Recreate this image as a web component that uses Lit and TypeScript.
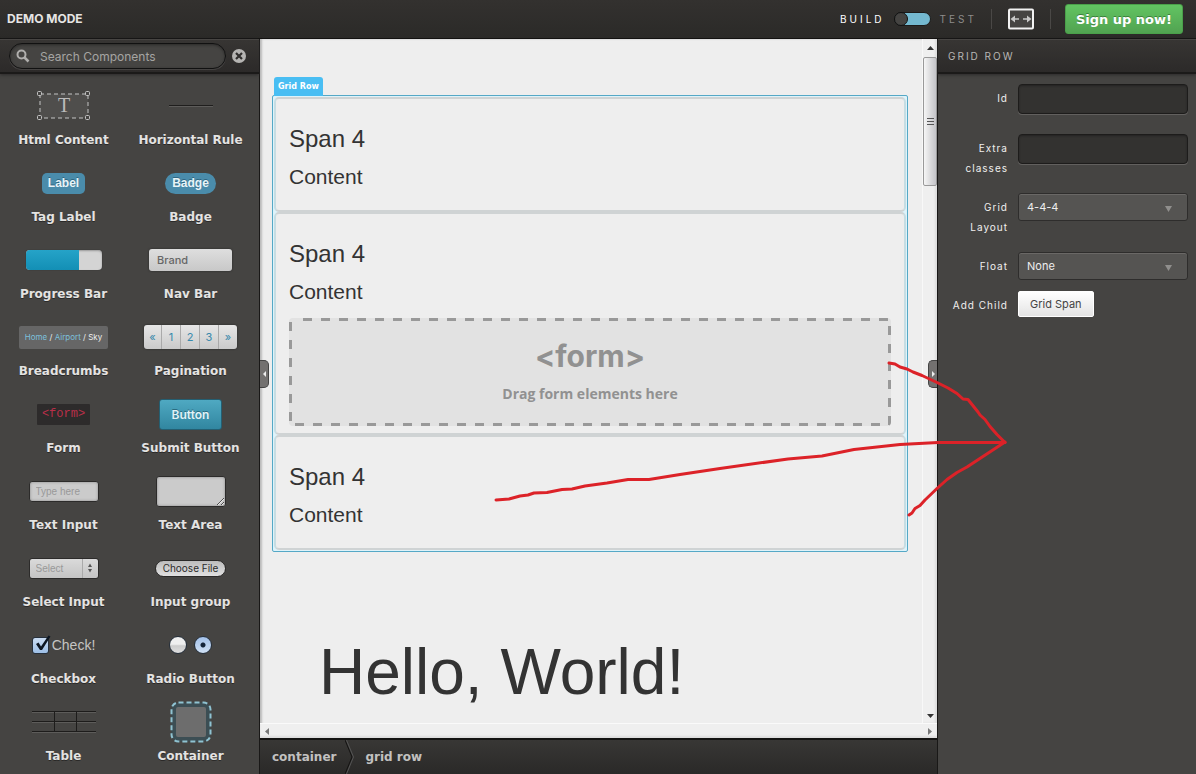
import { LitElement, html, svg, css, TemplateResult } from "lit";
import { customElement, property } from "lit/decorators.js";

interface ComponentItem {
  name: string;
  preview: TemplateResult;
}

const components: ComponentItem[] = [
  {
    name: "Html Content",
    preview: html`<svg width="54" height="30" viewBox="0 0 54 30" aria-hidden="true">
      <rect x="3" y="3" width="48" height="24" fill="#4f4e4c" stroke="#c4c4c4" stroke-dasharray="4 3" />
      ${[1, 49].map((x) => [1, 25].map((y) => svg`<rect x=${x - 0.5} y=${y - 0.5} width="4" height="4" rx="1" fill="#454442" stroke="#c4c4c4" />`))}
      <text x="27" y="21" text-anchor="middle" class="serif-t">T</text>
    </svg>`,
  },
  { name: "Horizontal Rule", preview: html`<hr class="rule" />` },
  { name: "Tag Label", preview: html`<span class="tag">Label</span>` },
  { name: "Badge", preview: html`<span class="tag pill">Badge</span>` },
  { name: "Progress Bar", preview: html`<div class="progress"><div class="progress-fill"></div></div>` },
  { name: "Nav Bar", preview: html`<div class="navbar">Brand</div>` },
  {
    name: "Breadcrumbs",
    preview: html`<div class="crumbs"><a href="#">Home</a> / <a href="#">Airport</a> / Sky</div>`,
  },
  {
    name: "Pagination",
    preview: html`<div class="pages">${["«", "1", "2", "3", "»"].map((p) => html`<a href="#">${p}</a>`)}</div>`,
  },
  { name: "Form", preview: html`<code class="code">&lt;form&gt;</code>` },
  { name: "Submit Button", preview: html`<button class="submit" type="button">Button</button>` },
  {
    name: "Text Input",
    preview: html`<input class="text" type="text" placeholder="Type here" aria-label="Text input preview" />`,
  },
  { name: "Text Area", preview: html`<textarea class="area" aria-label="Text area preview"></textarea>` },
  {
    name: "Select Input",
    preview: html`<span class="select-wrap">
      <select class="mini-select" aria-label="Select preview"><option>Select</option></select>
      <svg class="stepper" width="6" height="10" viewBox="0 0 6 10" aria-hidden="true">
        <path d="M3 0.500L5 4H1zM3 9.500L1 6h4z" fill="#555" />
      </svg>
    </span>`,
  },
  { name: "Input group", preview: html`<button class="file" type="button">Choose File</button>` },
  {
    name: "Checkbox",
    preview: html`<label class="check">
      <span class="check-box">
        <input type="checkbox" checked />
        <svg width="17" height="17" viewBox="0 0 17 17" aria-hidden="true">
          <path d="M2 9l2.500-1.500L7 11.500 14.500.500 16.500 1.500 8 15H6z" fill="#0c1622" />
        </svg>
      </span>
      Check!
    </label>`,
  },
  {
    name: "Radio Button",
    preview: html`<div class="radios">
      <input type="radio" name="demo" aria-label="First option" />
      <input type="radio" name="demo" aria-label="Second option" checked />
    </div>`,
  },
  {
    name: "Table",
    preview: html`<svg width="64" height="24" viewBox="0 0 64 24" aria-hidden="true">
      <path d="M0 2.500h64M0 12.500h64M0 22.500h64" stroke="#5d5c5a" />
      <path d="M0 1.500h64M0 11.500h64M0 21.500h64M22.500 1v21M44.500 1v21" stroke="#1d1c1b" />
    </svg>`,
  },
  {
    name: "Container",
    preview: html`<svg width="42" height="42" viewBox="0 0 42 42" aria-hidden="true">
      <rect x="1.500" y="1.500" width="39" height="39" rx="7" fill="#3c4e54" stroke="#8fc3d2" stroke-width="2" stroke-dasharray="5 3" />
      <rect x="6" y="6" width="30" height="30" rx="2" fill="#6d6d6d" />
    </svg>`,
  },
];

@customElement("component-palette")
export class ComponentPalette extends LitElement {
  static styles = css`
    :host {
      display: flex;
      flex-direction: column;
      min-width: 0;
      background: #454442;
      border-right: 1px solid #191817;
    }
    * { box-sizing: border-box; }
    .search {
      display: flex;
      align-items: center;
      gap: 6px;
      height: 35px;
      padding: 0 13px 0 9px;
      background: linear-gradient(#373533, #2c2a29);
      border-top: 1px solid #474543;
      border-bottom: 2px solid #1b1a19;
      box-shadow: 0 1px 3px #2c2b2a;
    }
    .field {
      position: relative;
      flex: 1;
      min-width: 0;
      display: flex;
    }
    .field input {
      flex: 1;
      min-width: 0;
      height: 26px;
      padding: 0 12px 0 30px;
      border: 1px solid #111;
      border-radius: 13px;
      background: #454442;
      box-shadow: inset 0 1px 3px #2a2928, 0 1px 0 #454342;
      color: #ddd;
      font: 12px "Inter", sans-serif;
      outline: none;
    }
    .field input::placeholder { color: #a5a4a2; }
    .field svg {
      position: absolute;
      left: 7px;
      top: 6px;
    }
    .clear {
      display: flex;
      flex: none;
      padding: 0;
      border: 0;
      background: none;
    }
    .list {
      display: grid;
      grid-template-columns: 1fr 1fr;
      margin: 0;
      padding: 0 5px 0 0;
      list-style: none;
    }
    .item {
      display: flex;
      flex-direction: column;
      align-items: center;
      height: 77px;
      padding-top: 8px;
    }
    .preview {
      display: flex;
      align-items: center;
      justify-content: center;
      height: 48px;
    }
    .name {
      font: bold 12px/20px "DejaVu Sans", sans-serif;
      color: #e4e3e2;
      white-space: nowrap;
      text-shadow: 0 1px 0 #2a2928;
    }
    .serif-t {
      font: 20px "Liberation Serif", serif;
      fill: #bbb;
    }
    .rule {
      width: 44px;
      height: 2px;
      margin: 0;
      border: 0;
      background: #1f1e1d;
      border-bottom: 1px solid #5d5c5a;
    }
    .tag {
      padding: 0 6px;
      border-radius: 5px;
      background: #4a8cab;
      color: #e8f4f8;
      font: bold 12px/21px "Liberation Sans", sans-serif;
      text-shadow: 0 -1px 0 #2f6580;
    }
    .pill { padding: 0 7px; border-radius: 11px; }
    .progress {
      width: 76px;
      height: 20px;
      border-radius: 4px;
      background: #d4d4d4;
      box-shadow: inset 0 1px 2px #999, 0 0 1px #222;
      overflow: hidden;
    }
    .progress-fill {
      width: 70%;
      height: 100%;
      background: linear-gradient(#25a3c8, #138fb5);
    }
    .navbar {
      width: 83px;
      padding: 0 8px;
      border-radius: 3px;
      background: linear-gradient(#dedede, #c8c8c8);
      box-shadow: 0 0 2px #222;
      color: #666;
      font: 500 11px/22px "Inter", sans-serif;
    }
    .crumbs {
      padding: 0 6px;
      border-radius: 2px;
      background: #666;
      color: #eee;
      font: 8px/23px "Inter", sans-serif;
      white-space: nowrap;
    }
    .crumbs a { color: #7cc0dc; text-decoration: none; }
    .pages {
      display: flex;
      border-radius: 3px;
      background: linear-gradient(#e6e6e6, #cacaca);
      box-shadow: 0 0 2px #222;
    }
    .pages a {
      width: 19px;
      border-left: 1px solid #aaa;
      color: #3889ac;
      text-align: center;
      text-decoration: none;
      font: 11px/24px "Inter", sans-serif;
    }
    .pages a:first-child { width: 17px; border-left: 0; }
    .code {
      padding: 0 5px;
      border-radius: 1px;
      background: #2d2b2b;
      color: #b92f49;
      font: 12px/21px "Liberation Mono", monospace;
    }
    .submit {
      width: 63px;
      height: 31px;
      padding: 0;
      border: 1px solid #245f72;
      border-radius: 3px;
      background: linear-gradient(#4fa9c2, #3186a0);
      color: #e2f3f8;
      font: 600 12px "Inter", sans-serif;
      text-shadow: 0 -1px 0 #2a6c80;
    }
    .text, .area, .mini-select {
      width: 70px;
      height: 21px;
      padding: 0 6px;
      border: 1px solid #2c2b2a;
      border-radius: 3px;
      background: #cbcbcb;
      box-shadow: inset 0 0 3px #888;
      color: #777;
      font: 10px "Liberation Sans", sans-serif;
    }
    .text::placeholder { color: #999; }
    .area { height: 31px; resize: vertical; }
    .select-wrap { position: relative; display: flex; }
    .mini-select {
      appearance: none;
      color: #999;
      background: linear-gradient(90deg, transparent 52px, #aaa 52px 53px, transparent 53px), linear-gradient(#dadada, #c4c4c4);
      box-shadow: none;
    }
    .stepper { position: absolute; right: 6px; top: 5px; }
    .file {
      height: 17px;
      padding: 0 7px;
      border: 1px solid #2a2928;
      border-radius: 9px;
      background: linear-gradient(#bcbcbc, #e0e0e0);
      color: #2a2a2a;
      font: 10px/15px "Inter", sans-serif;
    }
    .check {
      display: flex;
      align-items: center;
      gap: 3px;
      color: #c5c4c3;
      font: 14px "Liberation Sans", sans-serif;
    }
    .check-box { position: relative; display: flex; }
    .check-box svg { position: absolute; left: 2px; top: -2px; }
    .check-box input, .radios input {
      appearance: none;
      width: 17px;
      height: 17px;
      margin: 0;
      border: 1px solid #26303c;
      border-radius: 3px;
      background: linear-gradient(#c9dcf2, #9dbfe6);
    }
    .radios { display: flex; gap: 7px; }
    .radios input {
      width: 18px;
      height: 18px;
      border-radius: 9px;
      background: linear-gradient(#efefef 45%, #cdcdcd 55%, #dedede);
    }
    .radios input:checked {
      background: radial-gradient(circle, #14243a 2px, transparent 3px), linear-gradient(#a4c2ea, #cfe0f4);
    }
  `;

  render() {
    return html`
      <div class="search">
        <div class="field">
          <svg width="14" height="14" viewBox="0 0 14 14" aria-hidden="true">
            <circle cx="5.500" cy="5.500" r="4" fill="none" stroke="#b0afad" stroke-width="2" />
            <path d="M8.500 8.500l4 4" stroke="#b0afad" stroke-width="2.500" />
          </svg>
          <input type="text" placeholder="Search Components" aria-label="Search Components" />
        </div>
        <button class="clear" type="button" aria-label="Clear search">
          <svg width="14" height="14" viewBox="0 0 14 14">
            <circle cx="7" cy="7" r="7" fill="#b5b4b2" />
            <path d="M4 4l6 6M10 4l-6 6" stroke="#302e2d" stroke-width="2.200" />
          </svg>
        </button>
      </div>
      <ul class="list">
        ${components.map((c) => html`<li class="item"><div class="preview">${c.preview}</div><span class="name">${c.name}</span></li>`)}
      </ul>
    `;
  }
}

@customElement("page-canvas")
export class PageCanvas extends LitElement {
  static styles = css`
    :host {
      display: flex;
      flex-direction: column;
      position: relative;
      min-width: 0;
      background: #eee;
    }
    * { box-sizing: border-box; }
    .viewport {
      flex: 1;
      min-height: 0;
      display: grid;
      grid-template-columns: 1fr 15px;
      grid-template-rows: 1fr 15px;
      box-shadow: inset 2px 0 2px #bbb;
    }
    .page {
      min-height: 0;
      overflow: hidden;
      padding: 56px 14px 0 12px;
      font-family: "Liberation Sans", sans-serif;
      color: #333;
    }
    .row {
      position: relative;
      padding: 1px;
      border: 1px solid #55a8c6;
      border-radius: 2px;
      background: #def3fa;
    }
    .row-tab {
      position: absolute;
      left: 1px;
      bottom: 100%;
      padding: 0 4px;
      border-radius: 3px 3px 0 0;
      background: #49bef3;
      color: #fff;
      font: bold 8px/19px "DejaVu Sans", sans-serif;
      white-space: nowrap;
    }
    .span {
      padding: 20px 13px 7px;
      border: 2px solid #cfd3d4;
      border-left-color: #c6dde3;
      border-right-color: #c6dde3;
      border-radius: 5px;
      background: #eee;
    }
    .title { margin: 0; font-size: 24px; line-height: 40px; font-weight: normal; }
    .text { margin: 0 0 8px; font-size: 21px; line-height: 36px; }
    .drop {
      display: flex;
      flex-direction: column;
      align-items: center;
      height: 108px;
      padding-top: 18px;
      border-radius: 4px;
      color: #919191;
      background:
        repeating-linear-gradient(90deg, #999 0 9px, transparent 9px 18px) 14px 0 / 100% 3px no-repeat,
        repeating-linear-gradient(90deg, #999 0 9px, transparent 9px 18px) 6px 100% / 100% 3px no-repeat,
        repeating-linear-gradient(#999 0 9px, transparent 9px 18px) 0 4px / 3px 100% no-repeat,
        repeating-linear-gradient(#999 0 9px, transparent 9px 18px) 100% 8px / 3px 100% no-repeat,
        #e2e2e2;
    }
    .drop-title { font: bold 30px/40px "Inter", sans-serif; }
    .drop-text { font: bold 14px/36px "Open Sans", sans-serif; }
    .hero {
      margin: 80px 0 0 47px;
      font-size: 64px;
      line-height: 80px;
      font-weight: normal;
      white-space: nowrap;
    }
    .vbar, .hbar {
      display: flex;
      align-items: center;
      background: #efefef;
    }
    .vbar { flex-direction: column; border-left: 1px solid #f8f8f8; padding: 7px 0 5px; box-shadow: inset -2px 0 2px #ddd; }
    .hbar { grid-column: 1 / -1; justify-content: space-between; border-top: 1px solid #fafafa; padding: 0 4px; box-shadow: inset 0 -2px 2px #ddd; }
    .thumb {
      display: flex;
      flex-direction: column;
      align-items: center;
      justify-content: center;
      gap: 2px;
      width: 14px;
      height: 129px;
      margin-top: 7px;
      margin-bottom: auto;
      border: 1px solid #999;
      border-radius: 2px;
      background: linear-gradient(90deg, #f6f6f6, #dcdcde 50%, #c4c4c8);
    }
    .grip { width: 7px; height: 1px; background: #555; }
    .handle {
      position: absolute;
      top: 321px;
      display: flex;
      align-items: center;
      justify-content: center;
      width: 9px;
      height: 28px;
      padding: 0;
      border: 1px solid #444;
      background: #737170;
    }
    .left { left: 0; border-left: 0; border-radius: 0 5px 5px 0; }
    .right { right: 0; border-right: 0; border-radius: 5px 0 0 5px; }
    .trail {
      display: flex;
      align-items: center;
      height: 36px;
      border-top: 2px solid #141312;
      background: linear-gradient(#383735, #2a2928);
      padding-left: 12px;
      font: bold 12px/18px "DejaVu Sans", sans-serif;
    }
    .trail a { color: #c2c1c0; text-decoration: none; }
    .trail svg { margin: 0 11px 0 9px; }
  `;

  private span(extra: TemplateResult | null = null) {
    return html`<div class="span"><h3 class="title">Span 4</h3><p class="text">Content</p>${extra}</div>`;
  }

  render() {
    return html`
      <div class="viewport">
        <div class="page">
          <div class="row">
            <span class="row-tab">Grid Row</span>
            ${this.span()}
            ${this.span(html`<div class="drop">
              <div class="drop-title">&lt;form&gt;</div>
              <div class="drop-text">Drag form elements here</div>
            </div>`)}
            ${this.span()}
          </div>
          <h1 class="hero">Hello, World!</h1>
        </div>
        <div class="vbar">
          <svg width="7" height="4" viewBox="0 0 7 4" aria-hidden="true"><path d="M0 4L3.500 0 7 4z" fill="#333" /></svg>
          <div class="thumb"><div class="grip"></div><div class="grip"></div><div class="grip"></div></div>
          <svg width="7" height="4" viewBox="0 0 7 4" aria-hidden="true"><path d="M0 0h7L3.500 4z" fill="#333" /></svg>
        </div>
        <div class="hbar">
          <svg width="5" height="7" viewBox="0 0 5 7" aria-hidden="true"><path d="M5 0v7L1 3.500z" fill="#777" /></svg>
          <svg width="5" height="7" viewBox="0 0 5 7" aria-hidden="true"><path d="M0 0v7l4-3.500z" fill="#777" /></svg>
        </div>
      </div>
      <nav class="trail" aria-label="Selection">
        <a href="#">container</a>
        <svg width="9" height="34" viewBox="0 0 9 34" aria-hidden="true">
          <path d="M0 0l7 17-7 17" fill="none" stroke="#141312" />
          <path d="M1.500 0l7 17-7 17" fill="none" stroke="#555" />
        </svg>
        <a href="#">grid row</a>
      </nav>
      <button class="handle left" type="button" aria-label="Collapse components">
        <svg width="3" height="6" viewBox="0 0 3 6"><path d="M3 0v6L0 3z" fill="#eee" /></svg>
      </button>
      <button class="handle right" type="button" aria-label="Collapse settings">
        <svg width="3" height="6" viewBox="0 0 3 6"><path d="M0 0v6l3-3z" fill="#eee" /></svg>
      </button>
    `;
  }
}

@customElement("settings-panel")
export class SettingsPanel extends LitElement {
  @property() heading = "Grid Row";

  static styles = css`
    :host {
      display: block;
      background: #454442;
      border-left: 1px solid #191817;
    }
    * { box-sizing: border-box; }
    .heading {
      height: 35px;
      margin: 0;
      padding-left: 10px;
      background: linear-gradient(#373533, #2c2a29);
      border-top: 1px solid #474543;
      border-bottom: 2px solid #1b1a19;
      color: #b8b7b5;
      font: 10px/32px "Inter", sans-serif;
      letter-spacing: 2px;
      text-transform: uppercase;
      box-shadow: 0 1px 3px #2c2b2a;
    }
    .form {
      display: grid;
      grid-template-columns: 60px 1fr;
      column-gap: 10px;
      row-gap: 11px;
      align-items: start;
      padding: 10px 8px 10px 10px;
      font: 10px/20px "Inter", sans-serif;
      color: #f0efee;
    }
    .label {
      padding: 4px 0;
      text-align: right;
      letter-spacing: 1px;
    }
    .input {
      width: 100%;
      height: 30px;
      margin: 0 0 9px;
      padding: 0 8px;
      border: 1px solid #1d1c1b;
      border-radius: 4px;
      background: #333230;
      box-shadow: 0 1px 0 #62605e, inset 0 1px 2px #242322;
      color: #eee;
    }
    .select-wrap { position: relative; display: flex; }
    .select {
      appearance: none;
      width: 100%;
      height: 28px;
      padding: 0 8px;
      border: 1px solid #2e2d2c;
      border-radius: 3px;
      background: #555452;
      box-shadow: inset 0 1px 0 #6a6866;
      color: #eee;
      font: 11px "Inter", sans-serif;
    }
    .select-wrap svg { position: absolute; right: 16px; top: 13px; pointer-events: none; }
    .add {
      justify-self: start;
      height: 26px;
      padding: 0 11px;
      border: 1px solid #fff;
      border-radius: 2px;
      background: linear-gradient(#fff, #e4e4e4);
      color: #444;
      font: 11px "Inter", sans-serif;
    }
  `;

  private select(id: string, value: string) {
    return html`<span class="select-wrap">
      <select class="select" id=${id}><option>${value}</option></select>
      <svg width="7" height="6" viewBox="0 0 7 6" aria-hidden="true"><path d="M0 0h7L3.500 6z" fill="#908f8d" /></svg>
    </span>`;
  }

  render() {
    return html`
      <h2 class="heading">${this.heading}</h2>
      <form class="form">
        <label class="label" for="row-id">Id</label>
        <input class="input" id="row-id" type="text" />
        <label class="label" for="row-classes">Extra classes</label>
        <input class="input" id="row-classes" type="text" />
        <label class="label" for="row-layout">Grid Layout</label>
        ${this.select("row-layout", "4-4-4")}
        <label class="label" for="row-float">Float</label>
        ${this.select("row-float", "None")}
        <label class="label" for="row-add">Add Child</label>
        <button class="add" id="row-add" type="button">Grid Span</button>
      </form>
    `;
  }
}

@customElement("app-root")
export class AppRoot extends LitElement {
  static styles = css`
    :host {
      display: grid;
      position: relative;
      grid-template-columns: 260px 1fr 259px;
      grid-template-rows: 39px 1fr;
      height: 100vh;
      overflow: hidden;
      background: #454442;
    }
    * { box-sizing: border-box; }
    .top {
      grid-column: 1 / -1;
      display: flex;
      align-items: center;
      gap: 14px;
      padding: 0 13px 0 7px;
      background: linear-gradient(#33312f, #2b2a28);
      border-bottom: 1px solid #131211;
      font: 10px "Inter", sans-serif;
      color: #8d8c8a;
    }
    .mode {
      margin-right: auto;
      font: bold 12px/18px "Inter", sans-serif;
      color: #e6e5e4;
    }
    .modes { display: flex; align-items: center; gap: 9px; letter-spacing: 3px; }
    .on { color: #fff; }
    .toggle {
      display: flex;
      width: 37px;
      height: 14px;
      padding: 0;
      border: 1px solid #1c1b1a;
      border-radius: 7px;
      background: #74b9d0;
    }
    .knob {
      width: 14px;
      height: 14px;
      margin: -1px;
      border: 1px solid #111;
      border-radius: 7px;
      background: #454442;
    }
    .divider { width: 1px; height: 20px; background: #4a4846; }
    .resize {
      display: flex;
      margin: 0 2px;
      padding: 0;
      border: 0;
      background: none;
    }
    .signup {
      height: 30px;
      padding: 0 10px;
      border: 1px solid #4aa04a;
      border-radius: 3px;
      background: linear-gradient(#62c462, #51a351);
      color: #fff;
      font: bold 13px "DejaVu Sans", sans-serif;
      text-shadow: 0 -1px 0 #3c803c;
    }
    .sketch {
      position: absolute;
      left: 0;
      top: 0;
      pointer-events: none;
    }
  `;

  render() {
    return html`
      <header class="top">
        <span class="mode">DEMO MODE</span>
        <div class="modes">
          <span class="on">BUILD</span>
          <button class="toggle" type="button" role="switch" aria-checked="false" aria-label="Test mode">
            <span class="knob"></span>
          </button>
          <span>TEST</span>
        </div>
        <span class="divider"></span>
        <button class="resize" type="button" aria-label="Resize page">
          <svg width="26" height="22" viewBox="0 0 26 22">
            <rect x="1" y="1.500" width="24" height="19" rx="1" fill="#454442" stroke="#f2f2f2" stroke-width="2" />
            <path d="M2.500 11L7 7.500v2.700h4v1.600H7v2.700zM23.500 11L19 7.500v2.700h-4v1.600h4v2.700z" fill="#c8c8c8" />
          </svg>
        </button>
        <span class="divider"></span>
        <button class="signup" type="button">Sign up now!</button>
      </header>
      <component-palette></component-palette>
      <page-canvas></page-canvas>
      <settings-panel heading="Grid Row"></settings-panel>
      <svg class="sketch" width="1196" height="774" viewBox="0 0 1196 774" fill="none" stroke="#dc2228" stroke-width="3" stroke-linecap="round" stroke-linejoin="round" aria-hidden="true">
        <path d="M889 363l6 1 5 3 7 2 6 3 9 3.500 15 7 11 5.500 9 5.500 6 5.500 5 .500 10 12.500 2 3 5 4.500 5 7 7 8 8 8" />
        <path d="M496 500l13-1 11-3 8-1 6-2 13-.500 15-3 10-.500 13-3 22-3 21-3.500h21l31-5 40-6 68-9.500 34-3 32-6.500 46-5 38-2h67" />
        <path d="M1005 442l-38 25-10 5.500-10 7-10 9L925 500l-5 5.500-5 3-3 4.500-3 2" />
      </svg>
    `;
  }
}
